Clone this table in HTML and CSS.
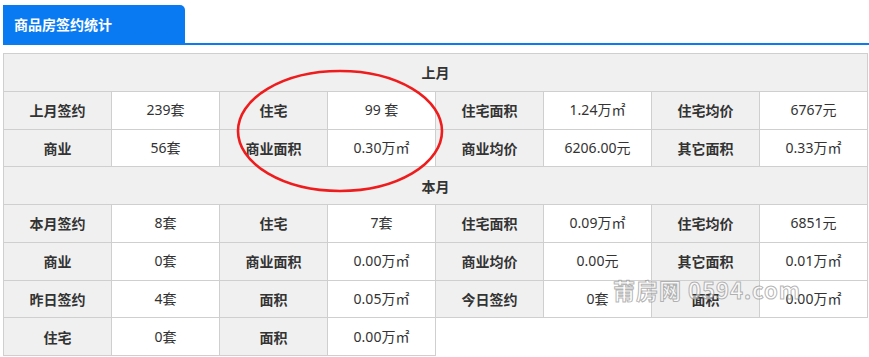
FILE: index.html
```html
<!DOCTYPE html>
<html lang="zh-CN">
<head>
<meta charset="utf-8">
<title>商品房签约统计</title>
<link rel="stylesheet" href="styles.css">
</head>
<body>
<div class="page">
  <div class="tabbar">
    <div class="tab">商品房签约统计</div>
  </div>
  <div class="board">
    <table class="stats">
      <tbody>
        <tr class="sec"><td colspan="8">上月</td></tr>
        <tr>
          <td class="lb">上月签约</td><td>239套</td>
          <td class="lb">住宅</td><td>99 套</td>
          <td class="lb">住宅面积</td><td>1.24万㎡</td>
          <td class="lb">住宅均价</td><td>6767元</td>
        </tr>
        <tr>
          <td class="lb">商业</td><td>56套</td>
          <td class="lb">商业面积</td><td>0.30万㎡</td>
          <td class="lb">商业均价</td><td>6206.00元</td>
          <td class="lb">其它面积</td><td>0.33万㎡</td>
        </tr>
        <tr class="sec"><td colspan="8">本月</td></tr>
        <tr>
          <td class="lb">本月签约</td><td>8套</td>
          <td class="lb">住宅</td><td>7套</td>
          <td class="lb">住宅面积</td><td>0.09万㎡</td>
          <td class="lb">住宅均价</td><td>6851元</td>
        </tr>
        <tr>
          <td class="lb">商业</td><td>0套</td>
          <td class="lb">商业面积</td><td>0.00万㎡</td>
          <td class="lb">商业均价</td><td>0.00元</td>
          <td class="lb">其它面积</td><td>0.01万㎡</td>
        </tr>
        <tr>
          <td class="lb">昨日签约</td><td>4套</td>
          <td class="lb">面积</td><td>0.05万㎡</td>
          <td class="lb">今日签约</td><td>0套</td>
          <td class="lb">面积</td><td>0.00万㎡</td>
        </tr>
        <tr class="last">
          <td class="lb">住宅</td><td>0套</td>
          <td class="lb">面积</td><td>0.00万㎡</td>
          <td class="void" colspan="4"></td>
        </tr>
      </tbody>
    </table>
    <svg class="circle" width="212" height="128" viewBox="0 0 212 128" aria-hidden="true">
      <ellipse cx="106" cy="64" rx="102" ry="60" fill="none" stroke="#ee1c1c" stroke-width="2.6"/>
    </svg>
    <div class="watermark">莆房网 0594.com</div>
  </div>
</div>
</body>
</html>
```

FILE: styles.css
```css
html, body {
  margin: 0;
  padding: 0;
  background: #ffffff;
}

body {
  font-family: "Noto Sans", "Noto Sans CJK SC", sans-serif;
  color: #333333;
}

.page {
  padding: 5px 0 0 3px;
}

.tabbar {
  display: flex;
  border-bottom: 2px solid #0a7cf0;
}

.tab {
  width: 182px;
  height: 38px;
  box-sizing: border-box;
  padding-left: 11px;
  display: flex;
  align-items: center;
  background: #0a7af2;
  color: #ffffff;
  font-family: "Noto Sans CJK SC", sans-serif;
  font-weight: 700;
  font-size: 14px;
  border-radius: 0 5px 0 0;
}

.board {
  position: relative;
  margin-top: 8px;
}

.stats {
  width: 865px;
  table-layout: fixed;
  border-collapse: collapse;
  font-size: 14px;
}

.stats td {
  height: 36.75px;
  padding: 0;
  border: 1px solid #cfcfcf;
  text-align: center;
  vertical-align: middle;
  background: #ffffff;
  line-height: 18px;
}

.stats td.lb,
.stats tr.sec td {
  background: #f0f0f0;
  font-family: "Noto Sans CJK SC", sans-serif;
  font-weight: 700;
}

.stats tr.last td.void {
  border: none;
  border-left: 1px solid #cfcfcf;
  background: transparent;
}

.circle {
  position: absolute;
  left: 231px;
  top: 14px;
  pointer-events: none;
}

.watermark {
  position: absolute;
  left: 610px;
  top: 220px;
  font-family: "Noto Sans CJK SC", sans-serif;
  font-weight: 700;
  font-size: 22px;
  letter-spacing: 1px;
  color: rgba(255, 255, 255, 0.6);
  -webkit-text-stroke: 1px rgba(130, 130, 130, 0.6);
  pointer-events: none;
  white-space: nowrap;
}
```
